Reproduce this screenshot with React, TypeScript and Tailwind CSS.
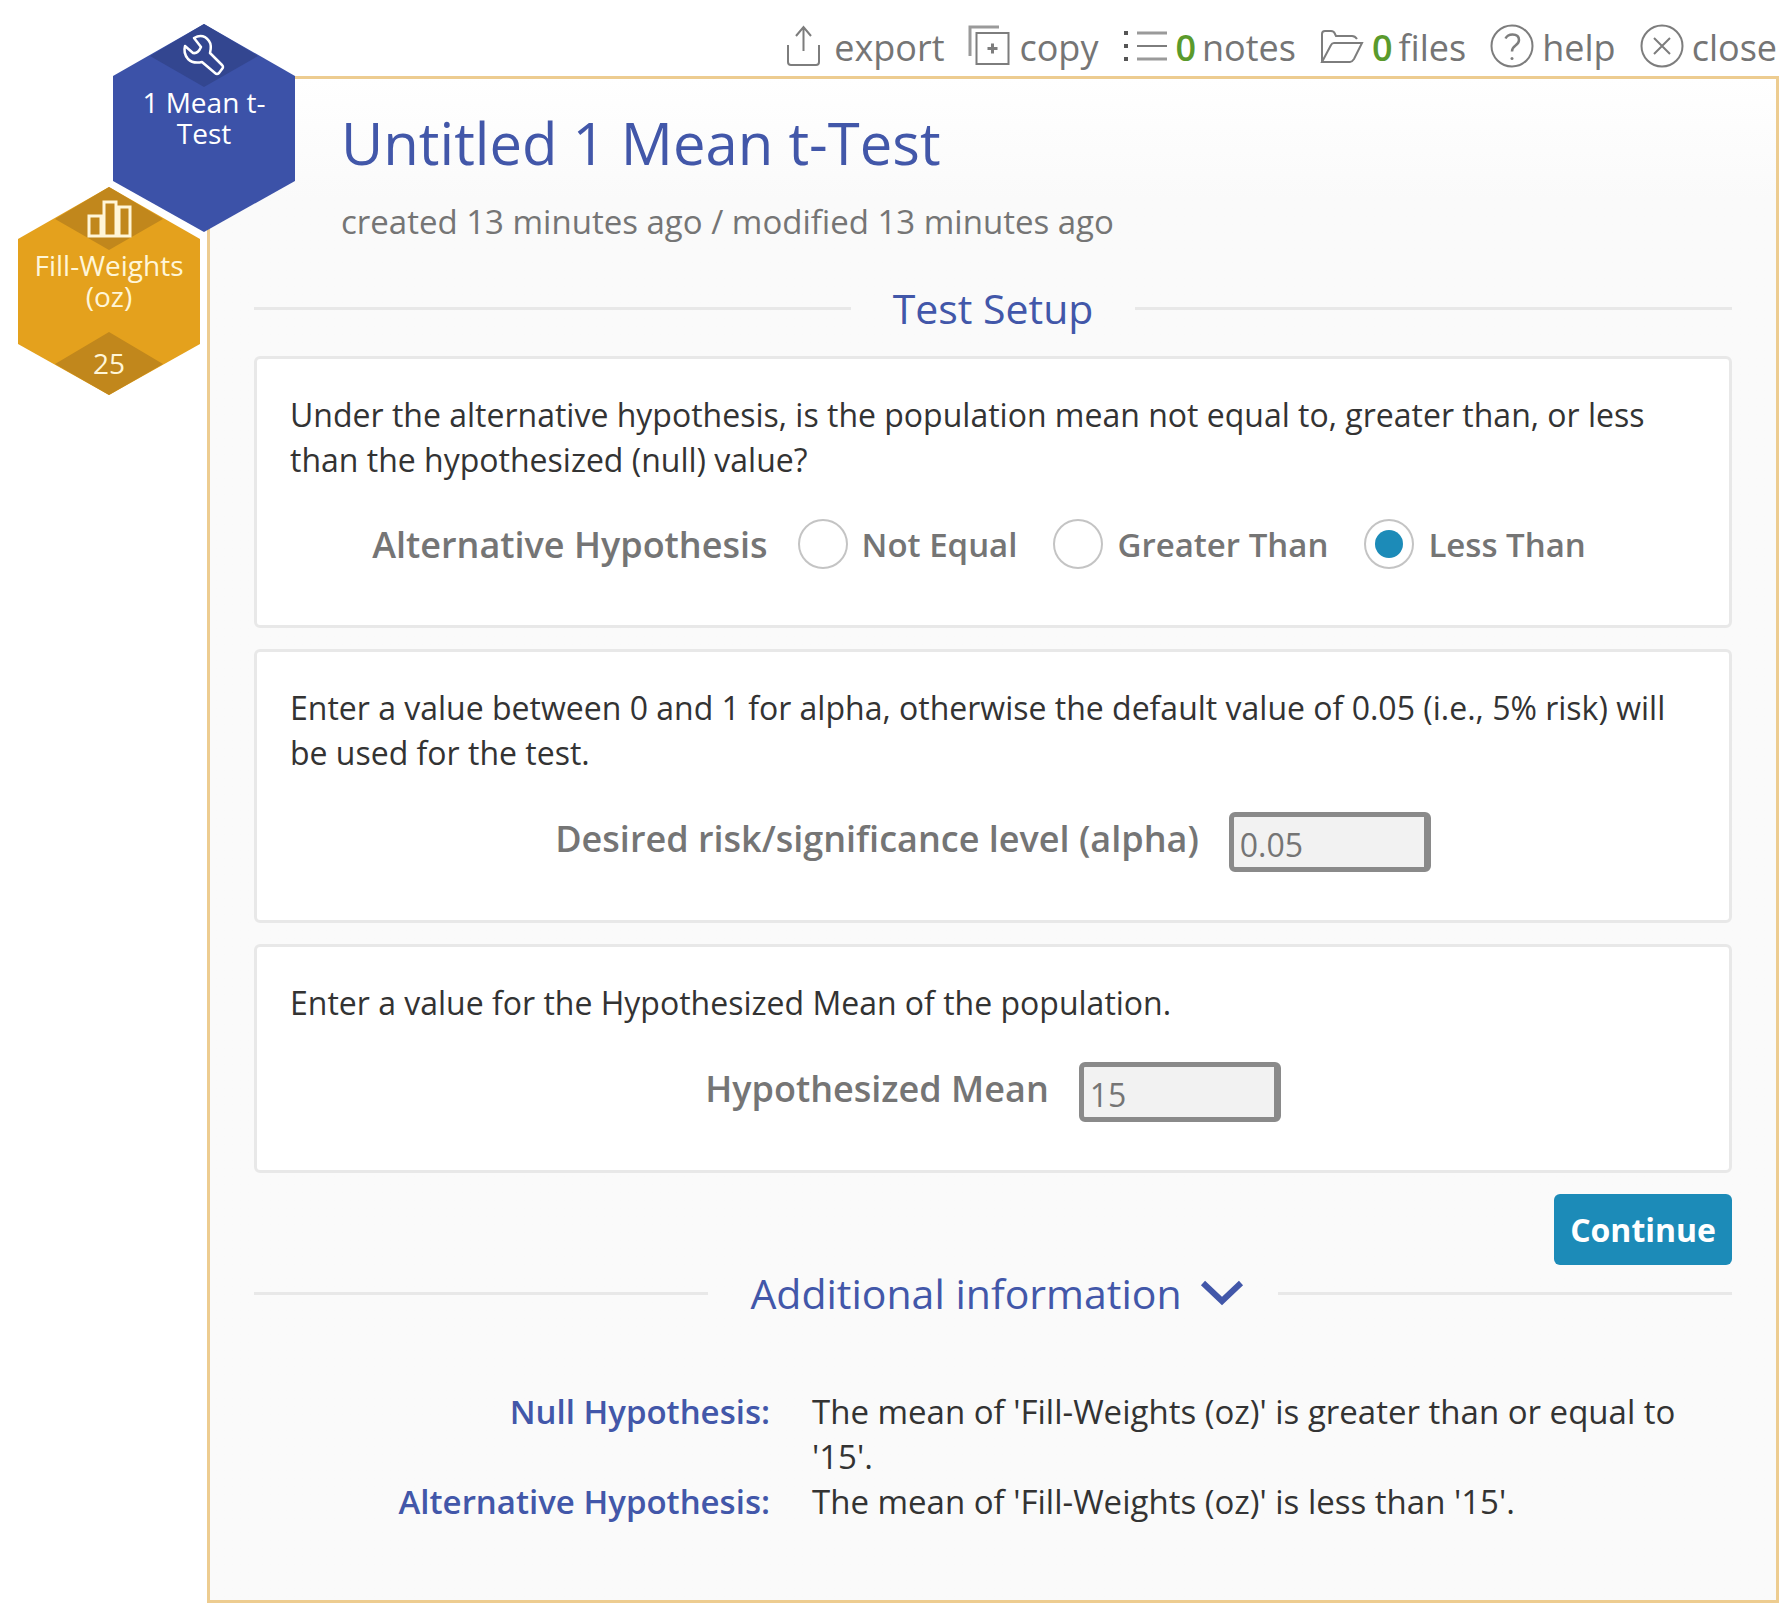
import { useId, useState } from "react";
import type { ReactNode } from "react";

const HEX_POINTS = "91,0 182,52 182,157 91,208 0,157 0,52";

type HexProps = {
  color: string;
  shade: string;
  icon: ReactNode;
  label: string;
  count?: number;
  className?: string;
};

function Hexagon({ color, shade, icon, label, count, className = "" }: HexProps) {
  return (
    <a
      href="#"
      className={`relative block h-[208px] w-[182px] text-center text-[28px] leading-[31px] font-medium ${className}`}
    >
      <svg viewBox="0 0 182 208" className="absolute inset-0 h-full w-full">
        <polygon points={HEX_POINTS} fill={color} />
        <polygon points="91,0 145,32 91,63 37,32" fill={shade} />
        {count !== undefined && <polygon points="91,145 145,177 91,208 37,177" fill={shade} />}
        {icon}
      </svg>
      <span className="relative flex h-full flex-col justify-between px-3 pt-[63px] pb-4">
        <span>{label}</span>
        {count !== undefined && <span>{count}</span>}
      </span>
    </a>
  );
}

function ToolButton({ icon, label, count }: { icon: ReactNode; label: string; count?: number }) {
  return (
    <button type="button" className="flex items-center gap-2 text-[36px] leading-[46px] text-[#757575]">
      {icon}
      <span className="flex gap-[6px]">
        {count !== undefined && <span className="font-semibold text-[#5a9a2c]">{count}</span>}
        <span>{label}</span>
      </span>
    </button>
  );
}

function Icon({ width, children }: { width: number; children: ReactNode }) {
  return (
    <svg
      width={width}
      height="46"
      viewBox={`0 0 ${width} 46`}
      fill="none"
      stroke="#7d7d7d"
      strokeWidth="2"
      className="mb-1 shrink-0"
    >
      {children}
    </svg>
  );
}

function Toolbar() {
  return (
    <nav className="flex h-[76px] items-end justify-end gap-6 pr-[2px] pb-[3px]">
      <ToolButton
        label="export"
        icon={
          <Icon width={40}>
            <path d="M2 22v17q0 3 3 3h25q3 0 3-3V22M17.500 28V4M10 13l7.500-9 7.500 9" />
          </Icon>
        }
      />
      <ToolButton
        label="copy"
        icon={
          <Icon width={43}>
            <path d="M8.500 10h32v31h-32z" />
            <path d="M2 33V4h29" stroke="#9a9a9a" strokeWidth="3" />
            <path d="M24.500 20.500v10M19.500 25.500h10" strokeWidth="3" />
          </Icon>
        }
      />
      <ToolButton
        label="notes"
        count={0}
        icon={
          <Icon width={45}>
            <path d="M15 10h30M15 36h30" stroke="#9a9a9a" strokeWidth="3" />
            <path d="M15 23h30" />
            <path d="M2 10h4M2 23h4M2 36h4" stroke="#555" strokeWidth="4" />
          </Icon>
        }
      />
      <ToolButton
        label="files"
        count={0}
        icon={
          <Icon width={44}>
            <path d="M2 39V11q0-3 3-3h6q3 0 4 3l1 2h16q3 0 5 3" />
            <path d="M2 39L11 22q1-2 3-2h28L34 36q-2 3-4 3z" />
          </Icon>
        }
      />
      <ToolButton
        label="help"
        icon={
          <Icon width={44}>
            <circle cx="22" cy="23" r="20.500" />
            <path d="M15.500 15.500q2-4 7-4 6.500 0 6.500 5.500 0 3-3.500 5.500t-3.500 6" strokeWidth="2.500" />
            <circle cx="22" cy="35.500" r="1.500" fill="#7d7d7d" stroke="none" />
          </Icon>
        }
      />
      <ToolButton
        label="close"
        icon={
          <Icon width={44}>
            <circle cx="22" cy="23" r="20.500" />
            <path d="M14 15l16 16M30 15L14 31" />
          </Icon>
        }
      />
    </nav>
  );
}

function SectionHeading({ children }: { children: ReactNode }) {
  return (
    <div className="flex items-center gap-[42px]">
      <div className="h-[3px] flex-1 bg-[#e8e8e8]" />
      <h2 className="text-[41px] leading-[56px] text-[#4257a9]">{children}</h2>
      <div className="h-[3px] flex-1 bg-[#e8e8e8]" />
    </div>
  );
}

function Card({ text, children }: { text: string; children: ReactNode }) {
  return (
    <section className="rounded-md border-[3px] border-[#e8e8e8] bg-white px-[33px] pt-[33px] pb-12 text-[#333]">
      <p className="mb-[37px] text-[32px]">{text}</p>
      {children}
    </section>
  );
}

function NumberField({ label, initial }: { label: string; initial: string }) {
  const id = useId();
  const [value, setValue] = useState(initial);
  return (
    <div className="flex items-center justify-center gap-[30px]">
      <label htmlFor={id} className="pb-2 text-[36px] font-semibold text-[#757575]">
        {label}
      </label>
      <input
        id={id}
        value={value}
        onChange={(e) => setValue(e.target.value)}
        className="h-[60px] w-[202px] rounded-md border-[5px] border-r-[7px] border-[#8a8a8a] bg-[#f2f2f2] px-[6px] pt-1 text-[32px] font-medium text-[#757575]"
      />
    </div>
  );
}

const OPTIONS = ["Not Equal", "Greater Than", "Less Than"];

function HypothesisField() {
  const labelId = useId();
  const [selected, setSelected] = useState("Less Than");
  return (
    <div role="radiogroup" aria-labelledby={labelId} className="mr-7 mb-2 flex items-center justify-center">
      <span id={labelId} className="mr-[30px] text-[36px] font-semibold text-[#757575]">
        Alternative Hypothesis
      </span>
      <div className="flex items-center gap-9">
        {OPTIONS.map((option) => (
          <label key={option} className="flex items-center gap-3.5 font-semibold text-[#757575]">
            <input
              type="radio"
              name="hypothesis"
              checked={selected === option}
              onChange={() => setSelected(option)}
              className="grid size-[50px] shrink-0 appearance-none place-items-center rounded-full border-2 border-[#c4c4c4] bg-white before:size-7 before:rounded-full checked:before:bg-[#1c8bb8]"
            />
            {option}
          </label>
        ))}
      </div>
    </div>
  );
}

export default function App() {
  return (
    <div className="flex min-h-screen bg-white font-['Open_Sans',sans-serif] text-[33px] leading-[45px]">
      <aside className="relative z-10 w-[207px] shrink-0 pt-6">
        <Hexagon
          className="ml-[113px] text-white"
          color="#3c52a8"
          shade="#334690"
          label="1 Mean t-Test"
          icon={
            <path
              d="M81 14q9-5 15 3 3 4 1 12l12 12q2 2 0 4l-3 4q-2 2-4 0L89 38q-9 2-14-3-5-6-3-13l8 7q5 1 8-6z"
              fill="none"
              stroke="#fff"
              strokeWidth="2.500"
              strokeLinejoin="round"
            />
          }
        />
        <Hexagon
          className="-mt-[45px] ml-[18px] text-[#fff6d8]"
          color="#e4a11d"
          shade="#c1871c"
          label="Fill-Weights (oz)"
          count={25}
          icon={<path d="M71 29h12v20H71zM86 15h12v34H86zM101 20h11v29h-11z" fill="none" stroke="#fff6d8" strokeWidth="3" />}
        />
      </aside>

      <div className="flex min-w-0 flex-1 flex-col pr-3 pb-[11px]">
        <Toolbar />
        <main className="flex-1 border-[3px] border-[#edcc90] bg-linear-to-b from-white to-[#fafafa] to-[120px] px-11 pt-6">
          <header className="mb-9 pl-[87px]">
            <h1 className="text-[58px] leading-[80px] text-[#4257a9]">Untitled 1 Mean t-Test</h1>
            <p className="mt-4 text-[#757575]">created 13 minutes ago / modified 13 minutes ago</p>
          </header>

          <SectionHeading>Test Setup</SectionHeading>

          <form className="mt-5 flex flex-col gap-[21px]" onSubmit={(e) => e.preventDefault()}>
            <Card text="Under the alternative hypothesis, is the population mean not equal to, greater than, or less than the hypothesized (null) value?">
              <HypothesisField />
            </Card>
            <Card text="Enter a value between 0 and 1 for alpha, otherwise the default value of 0.05 (i.e., 5% risk) will be used for the test.">
              <NumberField label="Desired risk/significance level (alpha)" initial="0.05" />
            </Card>
            <Card text="Enter a value for the Hypothesized Mean of the population.">
              <NumberField label="Hypothesized Mean" initial="15" />
            </Card>
            <button
              type="submit"
              className="h-[71px] self-end rounded-md bg-[#1c8bb8] px-4 text-[32px] font-bold text-white"
            >
              Continue
            </button>
          </form>

          <SectionHeading>
            <button type="button" className="flex items-center gap-[18px]">
              Additional information
              <svg
                width="44"
                height="26"
                viewBox="0 0 44 26"
                fill="none"
                stroke="#4257a9"
                strokeWidth="6"
                className="-mr-2"
              >
                <path d="M3 3l19 18L41 3" />
              </svg>
            </button>
          </SectionHeading>

          <dl className="mt-[68px] grid grid-cols-[516px_1fr] gap-x-[42px] pr-8">
            <dt className="text-right font-semibold text-[#4257a9]">Null Hypothesis:</dt>
            <dd className="text-[#333]">The mean of 'Fill-Weights (oz)' is greater than or equal to '15'.</dd>
            <dt className="text-right font-semibold text-[#4257a9]">Alternative Hypothesis:</dt>
            <dd className="text-[#333]">The mean of 'Fill-Weights (oz)' is less than '15'.</dd>
          </dl>
        </main>
      </div>
    </div>
  );
}
